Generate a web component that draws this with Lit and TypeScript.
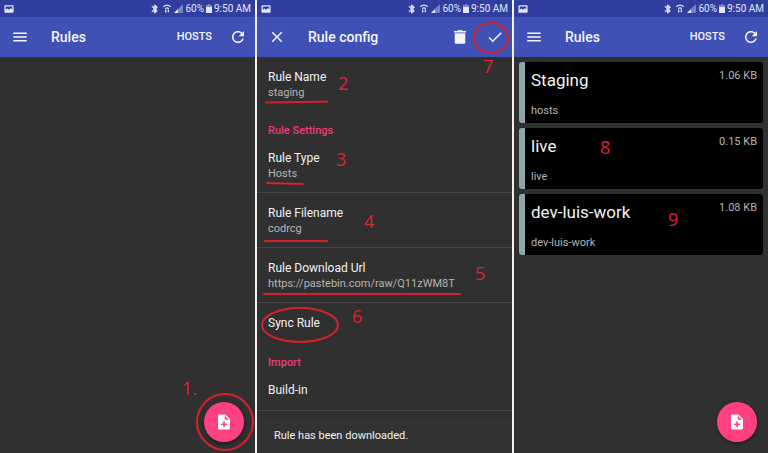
import { LitElement, html, svg, css } from "lit";
import { customElement, property } from "lit/decorators.js";

const PATHS = {
  menu: "M3 18h18v-2H3v2zm0-5h18v-2H3v2zm0-7v2h18V6H3z",
  close:
    "M19 6.41L17.59 5 12 10.59 6.41 5 5 6.41 10.59 12 5 17.59 6.41 19 12 13.41 17.59 19 19 17.59 13.41 12z",
  refresh:
    "M17.65 6.35C16.2 4.9 14.21 4 12 4c-4.42 0-7.99 3.58-7.99 8s3.57 8 7.99 8c3.73 0 6.84-2.55 7.73-6h-2.08c-.82 2.33-3.04 4-5.65 4-3.31 0-6-2.69-6-6s2.69-6 6-6c1.66 0 3.14.69 4.22 1.78L13 11h7V4l-2.35 2.35z",
  trash: "M5 7h14v12.5c0 .8-.7 1.5-1.5 1.5h-11C5.7 21 5 20.3 5 19.5zM20 4h-4l-1-1H9L8 4H4v2h16z",
  check: "M9 16.17L4.83 12l-1.42 1.41L9 19 21 7l-1.41-1.41z",
  noteAdd:
    "M14 2H6c-1.1 0-1.99.9-1.99 2L4 20c0 1.1.89 2 1.99 2H18c1.1 0 2-.9 2-2V8l-6-6zm2 14h-3v3h-2v-3H8v-2h3v-3h2v3h3v2zm-3-7V3.5L18.5 9H13z",
  image:
    "M21 3H3C2 3 1 4 1 5v14c0 1.1.9 2 2 2h18c1 0 2-1 2-2V5c0-1-1-2-2-2zm-1 9l-4-2-4 4-4-3-4 3V6h16v6z",
  bluetooth:
    "M17.71 7.71L12 2h-1v7.59L6.41 5 5 6.41 10.59 12 5 17.59 6.41 19 11 14.41V22h1l5.71-5.71-4.3-4.29 4.3-4.29zM13 5.83l1.88 1.88L13 9.59V5.83zm1.88 10.46L13 18.17v-3.76l1.88 1.88z",
};

const icon = (name: keyof typeof PATHS, cls = "icon") =>
  html`<svg class=${cls} viewBox="0 0 24 24" aria-hidden="true"><path fill="currentColor" d=${PATHS[name]}></path></svg>`;

@customElement("status-bar")
class StatusBar extends LitElement {
  static styles = css`
    :host {
      display: flex;
      align-items: center;
      height: 17px;
      padding: 0 4px;
      background: #303f9f;
      color: #e3e6f5;
      font-size: 10px;
      line-height: 16px;
      white-space: nowrap;
    }
    .small { width: 10px; height: 10px; }
    .right { display: flex; align-items: center; gap: 2px; margin-left: auto; }
    .bt { width: 10px; height: 10px; stroke: currentColor; stroke-width: 2; }
    .wifi { width: 10px; height: 9px; }
    .signal { width: 9px; height: 9px; }
    .battery { width: 6px; height: 9px; }
  `;
  render() {
    return html`
      ${icon("image", "small")}
      <span class="right">
        ${icon("bluetooth", "bt")}
        <svg class="wifi" viewBox="0 0 11 10" aria-hidden="true">
          <g fill="none" stroke="currentColor">
            <path d="M1.500 3Q5.500 -.5 9.500 3" stroke-width="1.6"></path>
            <path d="M3.500 5.200Q5.500 3.500 7.500 5.200" stroke-width="1.4"></path>
            <path d="M4 9.500V6.500M7 6.200V9.200" stroke-width="1.5"></path>
          </g>
        </svg>
        <svg class="signal" viewBox="0 0 9 9" aria-hidden="true">
          <path d="M9 0V9H0z" fill="currentColor" opacity=".4"></path>
          <path d="M4 5V9H0z" fill="currentColor"></path>
        </svg>
        <span>60%</span>
        <svg class="battery" viewBox="0 0 6 9" aria-hidden="true">
          <path d="M2 0h2v1h2v3H0V1h2z" fill="currentColor" opacity=".45"></path>
          <path d="M0 3h6v6H0z" fill="currentColor"></path>
        </svg>
        <span>9:50 AM</span>
      </span>
    `;
  }
}

@customElement("app-bar")
class AppBar extends LitElement {
  static styles = css`
    :host {
      display: flex;
      align-items: center;
      height: 40px;
      padding: 0 8px 0 11px;
      background: #3f51b5;
      color: #f4f5fb;
    }
    h1 { margin: 0 auto 0 22px; font-size: 14px; line-height: 20px; font-weight: 500; }
    .actions { display: flex; align-items: center; gap: 17px; }
    ::slotted(button) {
      display: flex;
      padding: 0;
      border: 0;
      background: none;
      color: inherit;
      font: 500 11px/18px Roboto, sans-serif;
    }
  `;
  @property() heading = "";
  render() {
    return html`
      <slot name="nav"></slot>
      <h1>${this.heading}</h1>
      <div class="actions"><slot></slot></div>
    `;
  }
}

const note = (x: number, y: number, text: string) => svg`<text x=${x} y=${y}>${text}</text>`;

const rules = [
  { title: "Staging", name: "hosts", size: "1.06 KB" },
  { title: "live", name: "live", size: "0.15 KB" },
  { title: "dev-luis-work", name: "dev-luis-work", size: "1.08 KB" },
];

@customElement("app-root")
class AppRoot extends LitElement {
  static styles = css`
    :host {
      display: grid;
      grid-template-columns: 255fr 255fr 254fr;
      gap: 2px;
      min-height: 100vh;
      background: #f3efef;
      color: #f2f2f2;
      font-family: Roboto, sans-serif;
    }
    .screen {
      position: relative;
      display: flex;
      flex-direction: column;
      min-width: 0;
      background: #303030;
    }
    .icon { display: block; width: 18px; height: 18px; }
    .marks {
      position: absolute;
      top: 0;
      left: 0;
      width: 100%;
      height: 100%;
      overflow: visible;
      pointer-events: none;
      fill: none;
      stroke: #d4222c;
      stroke-width: 2;
      stroke-linecap: round;
    }
    .marks text {
      fill: #dd2431;
      stroke: none;
      font-family: "Open Sans", sans-serif;
      font-size: 18px;
    }
    .fab-area { position: absolute; right: 11px; bottom: 11px; width: 40px; height: 40px; }
    .fab {
      display: flex;
      align-items: center;
      justify-content: center;
      width: 40px;
      height: 40px;
      padding: 0;
      border: 0;
      border-radius: 50%;
      background: #ff4081;
      color: #fff;
      box-shadow: 0 2px 4px rgba(0, 0, 0, 0.4);
    }
    .row {
      display: flex;
      flex-direction: column;
      width: 100%;
      padding: 12px 11px;
      border: 0;
      background: none;
      color: inherit;
      font: 12px/16px Roboto, sans-serif;
      text-align: left;
    }
    .row.two { padding-bottom: 11px; }
    .row.line { border-bottom: 1px solid #484848; }
    .value { color: #b4b4b4; font-size: 11px; line-height: 15px; }
    h2 {
      margin: 0;
      padding: 12px 11px 0;
      color: #e93d7b;
      font-size: 11px;
      line-height: 15px;
      font-weight: 500;
    }
    .snackbar {
      position: absolute;
      left: 0;
      right: 0;
      bottom: 0;
      padding: 8px 17px;
      background: #323232;
      font-size: 11px;
      line-height: 18px;
    }
    .cards {
      display: flex;
      flex-direction: column;
      gap: 5px;
      margin: 0;
      padding: 5px 5px 0;
      list-style: none;
    }
    .card {
      display: grid;
      grid-template-columns: 1fr auto;
      align-content: space-between;
      height: 61px;
      box-sizing: border-box;
      padding: 6px 6px 5px;
      border-left: 6px solid #90a4ae;
      border-radius: 3px;
      background: #000;
    }
    .card h3 { margin: 0; font-size: 17px; line-height: 24px; font-weight: 400; }
    .size { color: #b4b4b4; font-size: 11px; line-height: 15px; }
  `;

  private row(title: string, value = "", line = false) {
    return html`<button class="row ${value ? "two" : ""} ${line ? "line" : ""}">
      <span>${title}</span>${value ? html`<span class="value">${value}</span>` : ""}
    </button>`;
  }

  private rulesBar() {
    return html`<status-bar></status-bar>
      <app-bar heading="Rules">
        <button slot="nav" aria-label="Menu">${icon("menu")}</button>
        <button>HOSTS</button>
        <button aria-label="Refresh">${icon("refresh")}</button>
      </app-bar>`;
  }

  private fab(marks: unknown = "") {
    return html`<div class="fab-area">
      <button class="fab" aria-label="Add rule">${icon("noteAdd")}</button>
      ${marks}
    </div>`;
  }

  render() {
    return html`
      <section class="screen">
        ${this.rulesBar()}
        ${this.fab(html`<svg class="marks">
          <circle cx="21" cy="20" r="28"></circle>
          ${note(-22, -7, "1.")}
        </svg>`)}
      </section>

      <section class="screen">
        <status-bar></status-bar>
        <app-bar heading="Rule config">
          <button slot="nav" aria-label="Close">${icon("close")}</button>
          <button aria-label="Delete">${icon("trash")}</button>
          <button aria-label="Save">${icon("check")}</button>
        </app-bar>
        ${this.row("Rule Name", "staging")}
        <h2>Rule Settings</h2>
        ${this.row("Rule Type", "Hosts", true)}
        ${this.row("Rule Filename", "codrcg", true)}
        ${this.row("Rule Download Url", "https://pastebin.com/raw/Q11zWM8T", true)}
        ${this.row("Sync Rule")}
        <h2>Import</h2>
        ${this.row("Build-in", "", true)}
        <div class="snackbar" role="status">Rule has been downloaded.</div>
        <svg class="marks">
          <path d="M9 102.5L50 102 70 101.5"></path>
          <path d="M10 183L46 184"></path>
          <path d="M8 241H70"></path>
          <path d="M7 294H203"></path>
          <ellipse cx="43" cy="325" rx="38" ry="17"></ellipse>
          <ellipse cx="234" cy="38" rx="17" ry="15"></ellipse>
          ${note(81, 90, "2")} ${note(79, 166, "3")} ${note(107, 228, "4")}
          ${note(218, 280, "5")} ${note(95, 323, "6")} ${note(226, 73, "7")}
        </svg>
      </section>

      <section class="screen">
        ${this.rulesBar()}
        <ul class="cards">
          ${rules.map(
            (r) => html`<li class="card">
              <h3>${r.title}</h3>
              <span class="size">${r.size}</span>
              <span class="size">${r.name}</span>
            </li>`
          )}
        </ul>
        <svg class="marks">${note(86, 154, "8")} ${note(154, 226, "9")}</svg>
        ${this.fab()}
      </section>
    `;
  }
}
